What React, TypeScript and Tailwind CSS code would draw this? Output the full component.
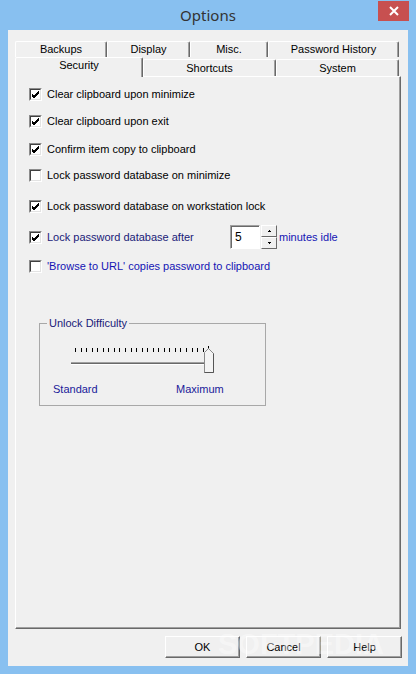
import type { ReactNode } from 'react';

const ui = "font-['Liberation_Sans',Arial,sans-serif] text-[11px] leading-[13px]";

function Check({ checked }: { checked: boolean }) {
  return (
    <div className="w-[13px] h-[13px] shrink-0 border-t border-l border-[#8c8c8c] border-r border-b border-r-white border-b-white bg-white">
      <div className="w-[11px] h-[11px] border-t border-l border-[#404040] border-r border-b border-r-[#e3e3e3] border-b-[#e3e3e3] bg-white flex items-center justify-center">
        {checked && (
          <svg width="9" height="9" viewBox="0 0 9 9">
            <path d="M1 4 L3 6 L8 1 M1 5 L3 7 L8 2 M1 6 L3 8 L8 3" stroke="#000" strokeWidth="1" fill="none" />
          </svg>
        )}
      </div>
    </div>
  );
}

function Row({ checked, className, children }: { checked: boolean; className: string; children: ReactNode }) {
  return (
    <div className={`h-[14px] flex items-center gap-[5px] ${className}`}>
      <Check checked={checked} />
      {children}
    </div>
  );
}

function Tab({ label, className }: { label: string; className: string }) {
  return (
    <div
      className={`flex items-center justify-center bg-[#f0f0f0] border-t border-l border-white border-r border-r-[#696969] shadow-[inset_-1px_0_#a0a0a0] rounded-t-[2px] ${className}`}
    >
      {label}
    </div>
  );
}

function Button({ label }: { label: string }) {
  return (
    <div className="w-[75px] h-[22px] flex items-center justify-center bg-[#f0f0f0] border-t border-l border-white border-r border-b border-r-[#696969] border-b-[#696969] shadow-[inset_-1px_-1px_#a0a0a0]">
      {label}
    </div>
  );
}

function Slider() {
  const ticks = Array.from({ length: 25 }, (_, i) => 5 + Math.round(i * 5.55));
  return (
    <svg width="150" height="28" viewBox="0 0 150 28" className="block">
      {ticks.map((x, i) => (
        <rect key={i} x={x} y={i === 24 ? 0 : 2} width="1" height={i === 24 ? 6 : 4} fill="#000" />
      ))}
      <rect x="1" y="16" width="136" height="1" fill="#a0a0a0" />
      <rect x="1" y="17" width="136" height="1" fill="#696969" />
      <rect x="1" y="18" width="136" height="1" fill="#ffffff" />
      <path d="M134.5 26.5 L134.5 6.5 L138.5 2.5 L143.5 7.5 L143.5 26.5 Z" fill="#f4f4f4" stroke="#8a8a8a" />
      <path d="M143.5 7.5 L143.5 26.5 L134.5 26.5" fill="none" stroke="#555" />
    </svg>
  );
}

export default function App() {
  return (
    <div className={`w-[416px] h-[674px] bg-[#88c0f0] flex flex-col text-black ${ui}`}>
      <div className="h-[30px] relative flex items-center justify-center">
        <span className="font-['Noto_Sans',sans-serif] text-[15px] leading-none text-[#333] pt-[1px]">Options</span>
        <div className="absolute right-[7px] top-[1px] w-[31px] h-[20px] bg-[#c75050] flex items-center justify-center">
          <svg width="10" height="10" viewBox="0 0 10 10">
            <path d="M1 1 L9 9 M9 1 L1 9" stroke="#fff" strokeWidth="2" />
          </svg>
        </div>
      </div>

      <div className="relative mx-[8px] h-[636px] bg-[#f0f0f0] flex flex-col pl-[7px] pt-[11px]">
        <div className="flex h-[16px]">
          <Tab label="Backups" className="w-[92px] h-[16px]" />
          <Tab label="Display" className="w-[83px] h-[16px]" />
          <Tab label="Misc." className="w-[78px] h-[16px]" />
          <Tab label="Password History" className="w-[131px] h-[16px]" />
        </div>
        <div className="flex items-end h-[19px]">
          <Tab label="Security" className="w-[128px] h-[20px] -mb-px relative z-10 pb-[4px]" />
          <Tab label="Shortcuts" className="w-[133px] h-[17px]" />
          <Tab label="System" className="w-[123px] h-[17px]" />
        </div>

        <div className="w-[386px] h-[553px] border-t border-l border-white border-r border-b border-r-[#696969] border-b-[#696969] shadow-[inset_-1px_-1px_#a0a0a0] flex flex-col pl-[13px]">
          <Row checked className="mt-[10px]">
            <span>Clear clipboard upon minimize</span>
          </Row>
          <Row checked className="mt-[13px]">
            <span>Clear clipboard upon exit</span>
          </Row>
          <Row checked className="mt-[14px]">
            <span>Confirm item copy to clipboard</span>
          </Row>
          <Row checked={false} className="mt-[12px]">
            <span>Lock password database on minimize</span>
          </Row>
          <Row checked className="mt-[17px]">
            <span>Lock password database on workstation lock</span>
          </Row>
          <Row checked className="mt-[17px]">
            <span className="w-[178px] text-[#1a1a78]">Lock password database after</span>
            <div className="flex items-center">
              <div className="w-[30px] h-[24px] border-t border-l border-[#a0a0a0] border-r border-b border-r-white border-b-white bg-white">
                <div className="h-full border-t border-l border-[#696969] border-r-0 border-b-0 pl-[3px] pt-[4px] text-[12px]">5</div>
              </div>
              <div className="ml-px flex flex-col">
                <div className="w-[16px] h-[12px] bg-[#f0f0f0] border-t border-l border-white border-r border-b border-r-[#696969] border-b-[#696969] flex items-center justify-center">
                  <svg width="5" height="3" viewBox="0 0 5 3"><path d="M2 0h1v1h1v1H1V1h1z" fill="#000" /></svg>
                </div>
                <div className="w-[16px] h-[12px] bg-[#f0f0f0] border-t border-l border-white border-r border-b border-r-[#696969] border-b-[#696969] flex items-center justify-center">
                  <svg width="5" height="3" viewBox="0 0 5 3"><path d="M1 0h3v1H3v1H2V1H1z" fill="#000" /></svg>
                </div>
              </div>
              <span className="ml-[2px] text-[#1414b4]">minutes idle</span>
            </div>
          </Row>
          <Row checked={false} className="mt-[15px]">
            <span className="text-[#1414b4]">'Browse to URL' copies password to clipboard</span>
          </Row>

          <fieldset className="mt-[44px] ml-[10px] w-[227px] h-[89px] border border-[#a8a8a8] px-0 pb-0">
            <legend className="ml-[7px] px-[2px] text-[#1a1a78]">Unlock Difficulty</legend>
            <div className="ml-[30px] mt-[16px]">
              <Slider />
            </div>
            <div className="flex mt-[9px] ml-[13px] text-[#1a1a9a]">
              <span className="w-[123px]">Standard</span>
              <span>Maximum</span>
            </div>
          </fieldset>
        </div>

        <div className="flex justify-end gap-[6px] pr-[6px] mt-[7px]">
          <Button label="OK" />
          <Button label="Cancel" />
          <Button label="Help" />
        </div>

        <div className="absolute left-[210px] top-[600px] font-['Liberation_Sans',sans-serif] font-bold text-[29px] leading-none text-white/40 pointer-events-none select-none">
          SOFTPEDIA
        </div>
      </div>
    </div>
  );
}
